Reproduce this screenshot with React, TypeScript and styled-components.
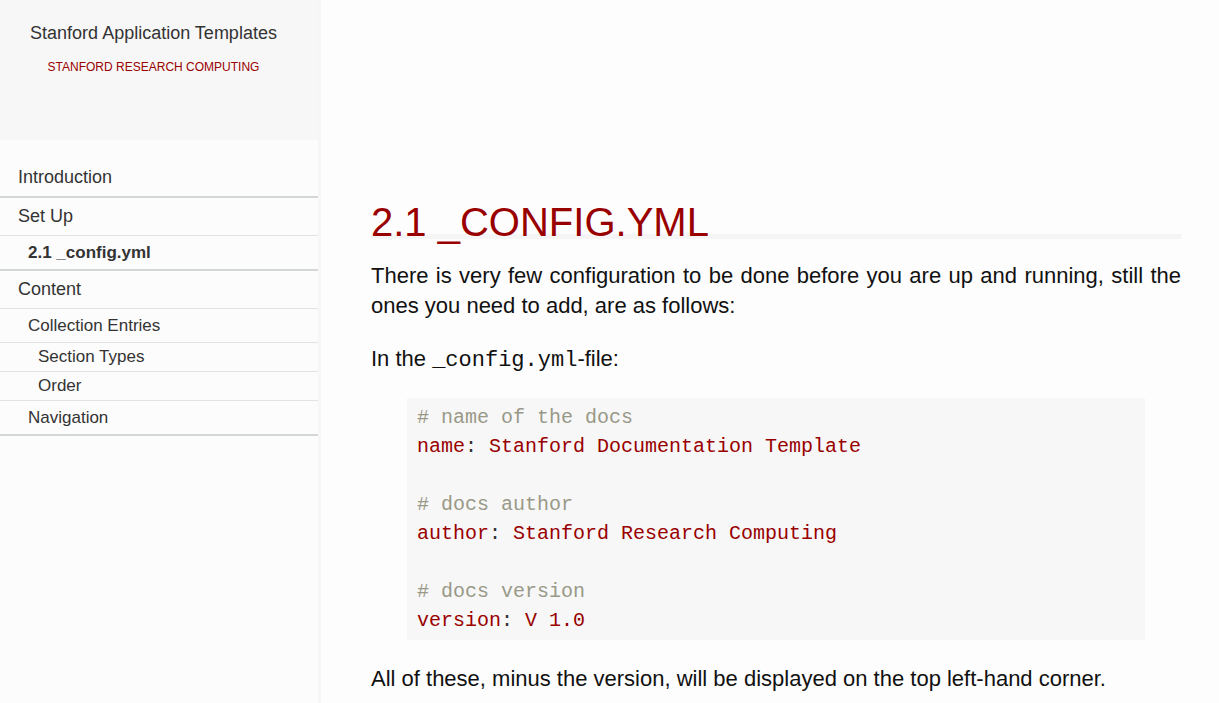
import styled, { createGlobalStyle } from "styled-components";

const Global = createGlobalStyle`
  html, body {
    margin: 0;
    padding: 0;
    background: #fdfdfd;
    font-family: "Liberation Sans", Arial, sans-serif;
    color: #222;
  }
`;

const Page = styled.div`
  display: flex;
  min-height: 100vh;
  overflow: hidden;
`;

const Sidebar = styled.aside`
  width: 318px;
  flex-shrink: 0;
  padding-right: 3px;
  background: #f6f6f6;
  display: flex;
  flex-direction: column;
`;

const Brand = styled.header`
  height: 140px;
  background: #f7f7f7;
  display: flex;
  flex-direction: column;
  align-items: center;
  padding: 22px 11px 0 0;
  box-sizing: border-box;
`;

const BrandTitle = styled.div`
  font-size: 18px;
  color: #333;
  line-height: 22px;
`;

const BrandSub = styled.div`
  margin-top: 16px;
  font-size: 12px;
  color: #990000;
  text-transform: uppercase;
`;

const Nav = styled.nav`
  flex: 1;
  background: #fcfcfc;
  padding-top: 18px;
`;

const NavItem = styled.div<{ level: number; active?: boolean; thick?: boolean; h: number }>`
  box-sizing: border-box;
  height: ${({ h }) => h}px;
  display: flex;
  align-items: center;
  padding-left: ${({ level }) => 18 + level * 10}px;
  font-size: ${({ level }) => (level === 0 ? 18 : 17)}px;
  font-weight: ${({ active }) => (active ? 700 : 400)};
  color: #333;
  border-bottom: ${({ thick }) => (thick ? "2px solid #d3d7d7" : "1px solid #e1e3e3")};
`;

const Main = styled.main`
  flex: 1;
  padding: 199px 38px 0 50px;
  min-width: 0;
`;

const Content = styled.article`
  width: 810px;
`;

const Title = styled.h1`
  margin: 0;
  font-size: 40px;
  font-weight: 400;
  line-height: 46px;
  color: #990000;
  text-transform: uppercase;
  border-bottom: 5px solid #f5f5f5;
  height: 35px;
`;

const Para = styled.p<{ gap: number }>`
  margin: ${({ gap }) => gap}px 0 0;
  font-size: 22px;
  line-height: 30px;
  text-align: justify;
  color: #111;
`;

const InlineCode = styled.code`
  font-family: "Liberation Mono", "Courier New", monospace;
  font-size: 22px;
`;

const CodeBlock = styled.pre`
  margin: 22px 36px 0 36px;
  background: #f7f7f7;
  padding: 5px 10px 5px 10px;
  font-family: "Liberation Mono", "Courier New", monospace;
  font-size: 20px;
  line-height: 29px;
  color: #333;
  white-space: pre;
`;

const Comment = styled.span`
  color: #999988;
`;

const Key = styled.span`
  color: #990000;
`;

const Value = styled.span`
  color: #990000;
`;

const nav = [
  { label: "Introduction", level: 0, thick: true, h: 40 },
  { label: "Set Up", level: 0, h: 38 },
  { label: "2.1 _config.yml", level: 1, active: true, thick: true, h: 35 },
  { label: "Content", level: 0, h: 38 },
  { label: "Collection Entries", level: 1, h: 34 },
  { label: "Section Types", level: 2, h: 29 },
  { label: "Order", level: 2, h: 29 },
  { label: "Navigation", level: 1, thick: true, h: 35 },
];

const config = [
  { comment: "# name of the docs", key: "name", value: "Stanford Documentation Template" },
  { comment: "# docs author", key: "author", value: "Stanford Research Computing" },
  { comment: "# docs version", key: "version", value: "V 1.0" },
];

export default function App() {
  return (
    <Page>
      <Global />
      <Sidebar>
        <Brand>
          <BrandTitle>Stanford Application Templates</BrandTitle>
          <BrandSub>Stanford Research Computing</BrandSub>
        </Brand>
        <Nav>
          {nav.map((item) => (
            <NavItem key={item.label} level={item.level} active={item.active} thick={item.thick} h={item.h}>
              {item.label}
            </NavItem>
          ))}
        </Nav>
      </Sidebar>
      <Main>
        <Content>
          <Title>2.1 _config.yml</Title>
          <Para gap={22}>
            There is very few configuration to be done before you are up and running, still the ones you need
            to add, are as follows:
          </Para>
          <Para gap={23}>
            In the <InlineCode>_config.yml</InlineCode>-file:
          </Para>
          <CodeBlock>
            {config.map((c, i) => (
              <span key={c.key}>
                {i > 0 ? "\n\n" : ""}
                <Comment>{c.comment}</Comment>
                {"\n"}
                <Key>{c.key}</Key>: <Value>{c.value}</Value>
              </span>
            ))}
          </CodeBlock>
          <Para gap={24}>All of these, minus the version, will be displayed on the top left-hand corner.</Para>
        </Content>
      </Main>
    </Page>
  );
}
